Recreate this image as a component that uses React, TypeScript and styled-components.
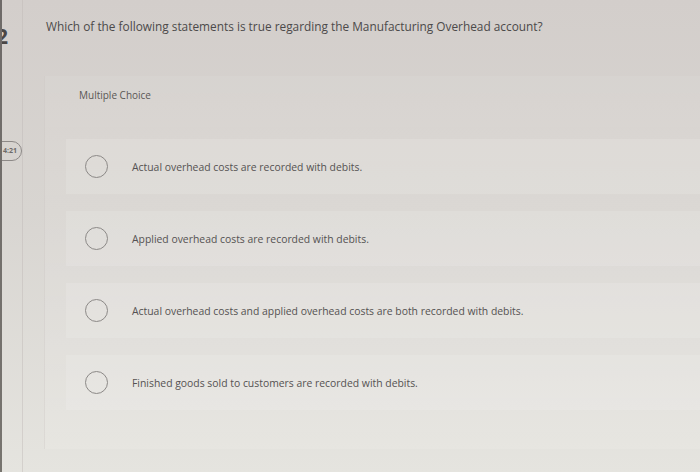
import styled, { createGlobalStyle } from 'styled-components'

const options = [
	'Actual overhead costs are recorded with debits.',
	'Applied overhead costs are recorded with debits.',
	'Actual overhead costs and applied overhead costs are both recorded with debits.',
	'Finished goods sold to customers are recorded with debits.',
]

export default function App() {
	return (
		<>
			<GlobalStyle />
			<Page>
				<Edge />
				<Rail>
					<Number>2</Number>
					<Timer>4:21</Timer>
				</Rail>
				<Main>
					<Question>Which of the following statements is true regarding the Manufacturing Overhead account?</Question>
					<Panel>
						<Label>Multiple Choice</Label>
						<List>
							{options.map((text) => (
								<Option key={text}>
									<Radio />
									<OptionText>{text}</OptionText>
								</Option>
							))}
						</List>
					</Panel>
				</Main>
			</Page>
		</>
	)
}

const GlobalStyle = createGlobalStyle`
	html, body {
		margin: 0;
		padding: 0;
	}
	body {
		width: 700px;
		height: 472px;
		overflow: hidden;
		font-family: 'Open Sans', Lato, sans-serif;
		background: linear-gradient(to bottom, #d3cecb 0%, #d8d5d1 45%, #e5e4df 100%);
	}
`
const Page = styled.div`
	display: flex;
	height: 472px;
`
const Edge = styled.div`
	width: 2px;
	background: linear-gradient(to bottom, #6e6a68, #77746f);
`
const Rail = styled.div`
	position: relative;
	width: 20px;
	border-right: 1px solid rgba(190, 185, 181, 0.45);
	overflow: hidden;
`
const Number = styled.div`
	margin: 25px 0 0 -6px;
	font-size: 21px;
	font-weight: 700;
	line-height: 22px;
	color: #4a4645;
`
const Timer = styled.div`
	position: absolute;
	top: 141px;
	right: 0;
	width: 32px;
	height: 20px;
	border: 1px solid #8d8987;
	border-radius: 10px;
	box-sizing: border-box;
	font-size: 7px;
	font-weight: 700;
	line-height: 18px;
	text-align: right;
	padding-right: 4px;
	color: #6d6a68;
`
const Main = styled.div`
	flex: 1;
	display: flex;
	flex-direction: column;
`
const Question = styled.div`
	margin: 18px 0 0 23px;
	font-size: 11.85px;
	color: #4c4a4a;
	line-height: 16px;
`
const Panel = styled.div`
	margin: 42px 0 0 21px;
	height: 373px;
	background: linear-gradient(to bottom, rgba(255, 255, 255, 0.06), rgba(255, 255, 255, 0.1));
	border-left: 1px solid rgba(200, 196, 192, 0.35);
	padding: 13px 0 0 21px;
	box-sizing: border-box;
`
const Label = styled.div`
	font-size: 10px;
	color: #5a5756;
	line-height: 12px;
	margin-left: 13px;
`
const List = styled.div`
	display: flex;
	flex-direction: column;
	gap: 17px;
	margin-top: 38px;
`
const Option = styled.div`
	display: flex;
	align-items: center;
	height: 55px;
	background: rgba(255, 255, 255, 0.13);
	padding-left: 19px;
`
const Radio = styled.div`
	width: 23px;
	height: 23px;
	border-radius: 50%;
	border: 1px solid #8c8987;
	box-sizing: border-box;
	flex-shrink: 0;
`
const OptionText = styled.div`
	margin-left: 24px;
	font-size: 10.4px;
	color: #555252;
`
